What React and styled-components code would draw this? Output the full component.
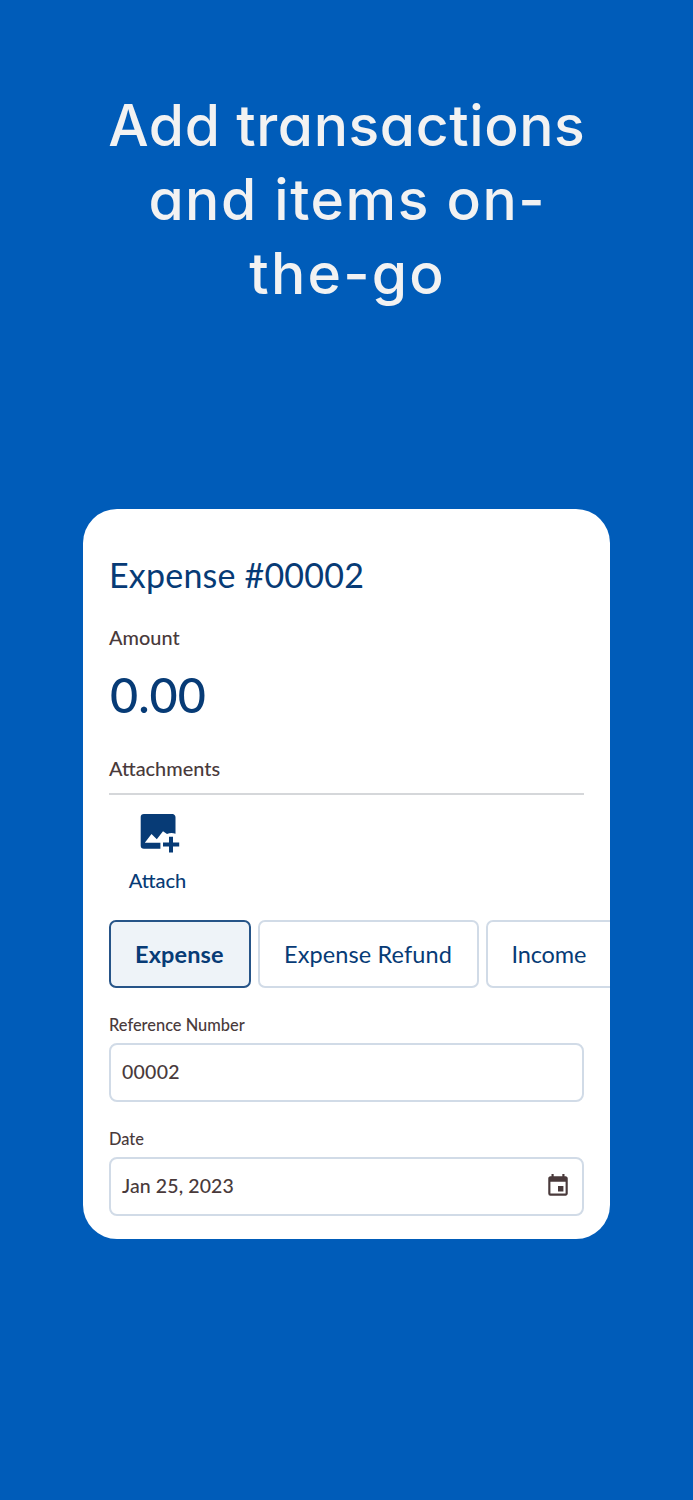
import React from 'react';
import styled, { createGlobalStyle } from 'styled-components';
import { MdEvent } from 'react-icons/md';

const titleLines = [
  { text: 'Add transactions', spacing: 0.6 },
  { text: 'and items on-', spacing: 1.5 },
  { text: 'the-go', spacing: 2.2 },
];

const types = [
  { label: 'Expense', width: 142, spacing: 0.12, active: true },
  { label: 'Expense Refund', width: 220.5, spacing: 0.12 },
  { label: 'Income', width: 152, spacing: -0.15 },
];

const AttachIcon = () => (
  <svg width='40' height='40' viewBox='0 0 40 40' fill='currentColor'>
    <path d='M4 0H32A3.3 3.3 0 0 1 35.5 3.5V19.8A12 12 0 0 0 27 20L23 17.3L16.8 25.3L11.5 20L4.8 28.8H20.4V34.8H4A3.3 3.3 0 0 1 0.7 31.5V3.5A3.3 3.3 0 0 1 4 0Z' />
    <path d='M29 22.8H33V28.6H39.2V32.6H33V38.6H29V32.6H23V28.6H29Z' />
  </svg>
);

export default function App() {
  return (
    <Page>
      <GlobalStyle />
      <Title>
        {titleLines.map((line) => (
          <TitleLine key={line.text} $spacing={line.spacing}>
            {line.text}
          </TitleLine>
        ))}
      </Title>
      <Card>
        <Heading>Expense #00002</Heading>
        <Label>Amount</Label>
        <Amount>0.00</Amount>
        <Label>Attachments</Label>
        <Divider />
        <AttachButton>
          <AttachIcon />
          <span>Attach</span>
        </AttachButton>
        <TypeList>
          {types.map((type) => (
            <TypeButton key={type.label} $active={type.active} $width={type.width} $spacing={type.spacing}>
              {type.label}
            </TypeButton>
          ))}
        </TypeList>
        <FieldLabel>Reference Number</FieldLabel>
        <Field $spacing={0.25}>00002</Field>
        <FieldLabel>Date</FieldLabel>
        <Field $spacing={0.1}>
          Jan 25, 2023
          <MdEvent size={26} />
        </Field>
      </Card>
    </Page>
  );
}

const GlobalStyle = createGlobalStyle`
  * {
    box-sizing: border-box;
  }
  body {
    margin: 0;
    background: #005cb9;
  }
`;

const Page = styled.main`
  display: flex;
  flex-direction: column;
  align-items: center;
  height: 1500px;
  padding-top: 89px;
  background: #005cb9;
  font-family: Lato, 'Noto Sans', sans-serif;
`;

const Title = styled.h1`
  height: 420px;
  margin: 0;
  color: #f2f2f2;
  font-family: Inter, sans-serif;
  font-size: 57px;
  font-weight: 500;
  font-feature-settings: 'cv11';
  line-height: 74px;
  text-align: center;
`;

const TitleLine = styled.span`
  display: block;
  padding-left: ${({ $spacing }) => $spacing}px;
  letter-spacing: ${({ $spacing }) => $spacing}px;
  white-space: nowrap;
`;

const Card = styled.section`
  display: flex;
  flex-direction: column;
  width: 527px;
  height: 730px;
  padding: 42px 26.5px 0 26px;
  border-radius: 34px;
  background: #fff;
  overflow: hidden;
`;

const Heading = styled.h2`
  height: 72px;
  margin: 0;
  color: #073b76;
  font-size: 34px;
  font-weight: 400;
  letter-spacing: 0.2px;
  line-height: 47px;
`;

const Label = styled.div`
  color: #493a3b;
  font-size: 19.9px;
  font-weight: 500;
  line-height: 28px;
`;

const Amount = styled.div`
  height: 103px;
  padding-left: 1px;
  color: #073b76;
  font-size: 48.5px;
  font-weight: 500;
  line-height: 87px;
`;

const Divider = styled.div`
  height: 2px;
  margin-top: 11px;
  background: #d5d7da;
`;

const AttachButton = styled.div`
  display: flex;
  flex-direction: column;
  align-items: center;
  width: 97px;
  margin-top: 19px;
  color: #073b76;
  font-size: 20px;
  font-weight: 500;
  line-height: 28px;
  svg {
    margin: 0 0 12px 4px;
  }
`;

const TypeList = styled.div`
  display: flex;
  flex: none;
  gap: 7px;
  margin: 26px -26.5px 0 0;
  overflow: hidden;
`;

const TypeButton = styled.div`
  flex: none;
  width: ${({ $width }) => $width}px;
  height: 68px;
  padding-left: 24px;
  border: 2px solid ${({ $active }) => ($active ? '#265488' : '#d1dbe7')};
  border-radius: 7px;
  background: ${({ $active }) => ($active ? '#eef3f8' : '#fff')};
  color: #073b76;
  font-size: 23.5px;
  font-weight: ${({ $active }) => ($active ? 700 : 400)};
  letter-spacing: ${({ $spacing }) => $spacing}px;
  line-height: 64px;
  white-space: nowrap;
`;

const FieldLabel = styled.div`
  margin: 26px 0 7px;
  color: #493a3b;
  font-size: 16.4px;
  font-weight: 500;
  line-height: 22px;
`;

const Field = styled.div`
  display: flex;
  flex: none;
  align-items: center;
  justify-content: space-between;
  height: 59px;
  padding: 0 11px 2px;
  border: 2px solid #d1dbe7;
  border-radius: 8px;
  color: #493a3b;
  font-size: 19.5px;
  font-weight: 500;
  letter-spacing: ${({ $spacing }) => $spacing}px;
`;
